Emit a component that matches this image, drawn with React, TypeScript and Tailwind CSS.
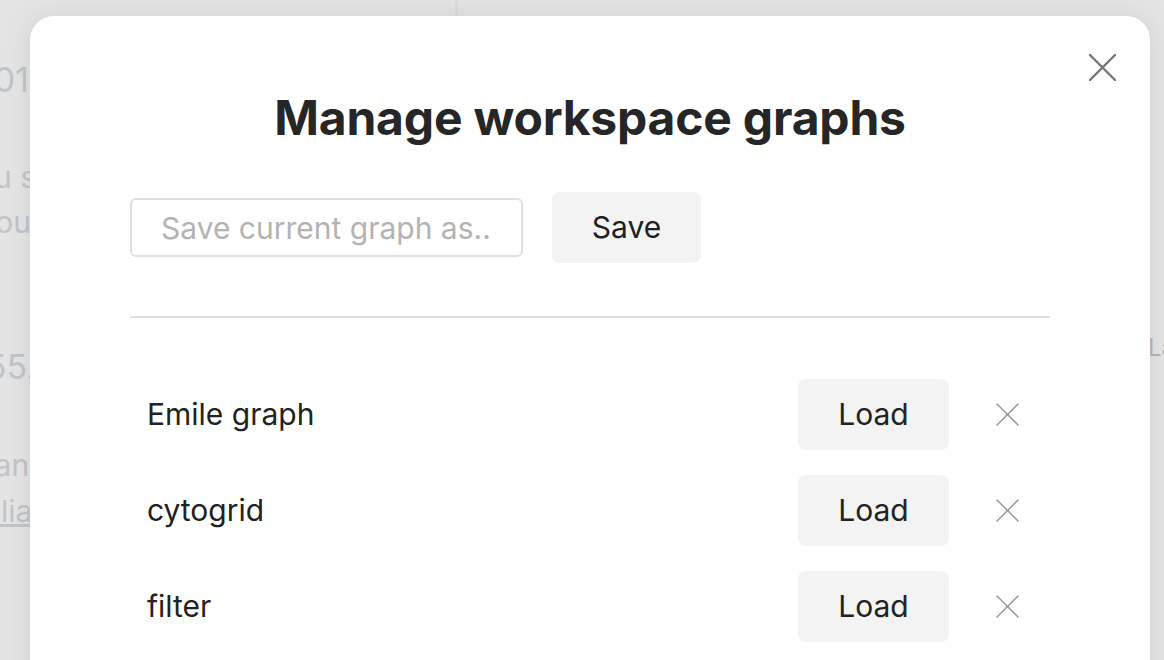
const graphs = ["Emile graph", "cytogrid", "filter"]

function Cross({ size, stroke, color }: { size: number; stroke: number; color: string }) {
    return (
        <svg width={size} height={size} viewBox={`0 0 ${size} ${size}`} fill="none" stroke={color} strokeWidth={stroke} strokeLinecap="round">
            <line x1={1} y1={1} x2={size - 1} y2={size - 1} />
            <line x1={size - 1} y1={1} x2={1} y2={size - 1} />
        </svg>
    )
}

function GraphRow({ name }: { name: string }) {
    return (
        <div className="flex items-center h-[71px] pl-[17px]">
            <div className="flex-1 text-[30px] text-[#222]">{name}</div>
            <button className="w-[151px] h-[71px] rounded-[8px] bg-[#f3f3f3] text-[30px] text-[#222]">Load</button>
            <div className="ml-[47px] mr-[31px] flex items-center justify-center">
                <Cross size={23} stroke={1.3} color="#8e8e8e" />
            </div>
        </div>
    )
}

export default function App() {
    return (
        <div className="relative w-full h-[660px] overflow-hidden bg-[#e4e4e4] font-['Inter',sans-serif]">
            {/* page under the overlay */}
            <div className="flex h-full">
                <div className="w-[458px] border-r-[3px] border-[#dcdcdc] text-[#c0c5ca] text-[30px] leading-[40px]">
                    <div className="flex justify-end w-[29px] mt-[60px] text-[34px] whitespace-nowrap">2001</div>
                    <div className="flex justify-end w-[36px] mt-[57px] whitespace-nowrap">you s</div>
                    <div className="flex justify-end w-[31px] mt-[5px] whitespace-nowrap">you</div>
                    <div className="flex justify-end w-[36px] mt-[105px] text-[34px] whitespace-nowrap">455.</div>
                    <div className="flex justify-end w-[46px] mt-[58px] whitespace-nowrap">Kana</div>
                    <div className="flex justify-end w-[50px] mt-[6px] whitespace-nowrap underline">Julian</div>
                </div>
                <div className="flex-1 flex justify-end">
                    <div className="w-[16px] overflow-hidden pt-[330px] text-[24px] text-[#b5b5b5] whitespace-nowrap">Last</div>
                </div>
            </div>

            {/* modal */}
            <div className="absolute left-[30px] top-[16px] w-[1120px] h-[720px] rounded-[24px] bg-white shadow-[0_0_30px_rgba(0,0,0,0.08)]">
                <button className="absolute right-[34px] top-[38px]">
                    <Cross size={27} stroke={2.4} color="#767676" />
                </button>
                <div className="px-[100px] pt-[70px]">
                    <h1 className="text-center text-[48px] leading-[64px] font-bold text-[#262626] tracking-[-0.2px]">Manage workspace graphs</h1>
                    <div className="flex items-center mt-[42px]">
                        <input
                            placeholder="Save current graph as.."
                            className="w-[393px] h-[59px] rounded-[6px] border-2 border-[#e0e0e0] px-[29px] text-[30px] text-[#222] placeholder:text-[#b3b3b3] outline-none"
                        />
                        <button className="ml-[29px] w-[149px] h-[71px] rounded-[8px] bg-[#f3f3f3] text-[30px] text-[#222]">Save</button>
                    </div>
                    <div className="mt-[53px] border-t-2 border-[#e0e0e0]" />
                    <div className="mt-[61px] flex flex-col gap-[25px]">
                        {graphs.map((g) => (
                            <GraphRow key={g} name={g} />
                        ))}
                    </div>
                </div>
            </div>
        </div>
    )
}
